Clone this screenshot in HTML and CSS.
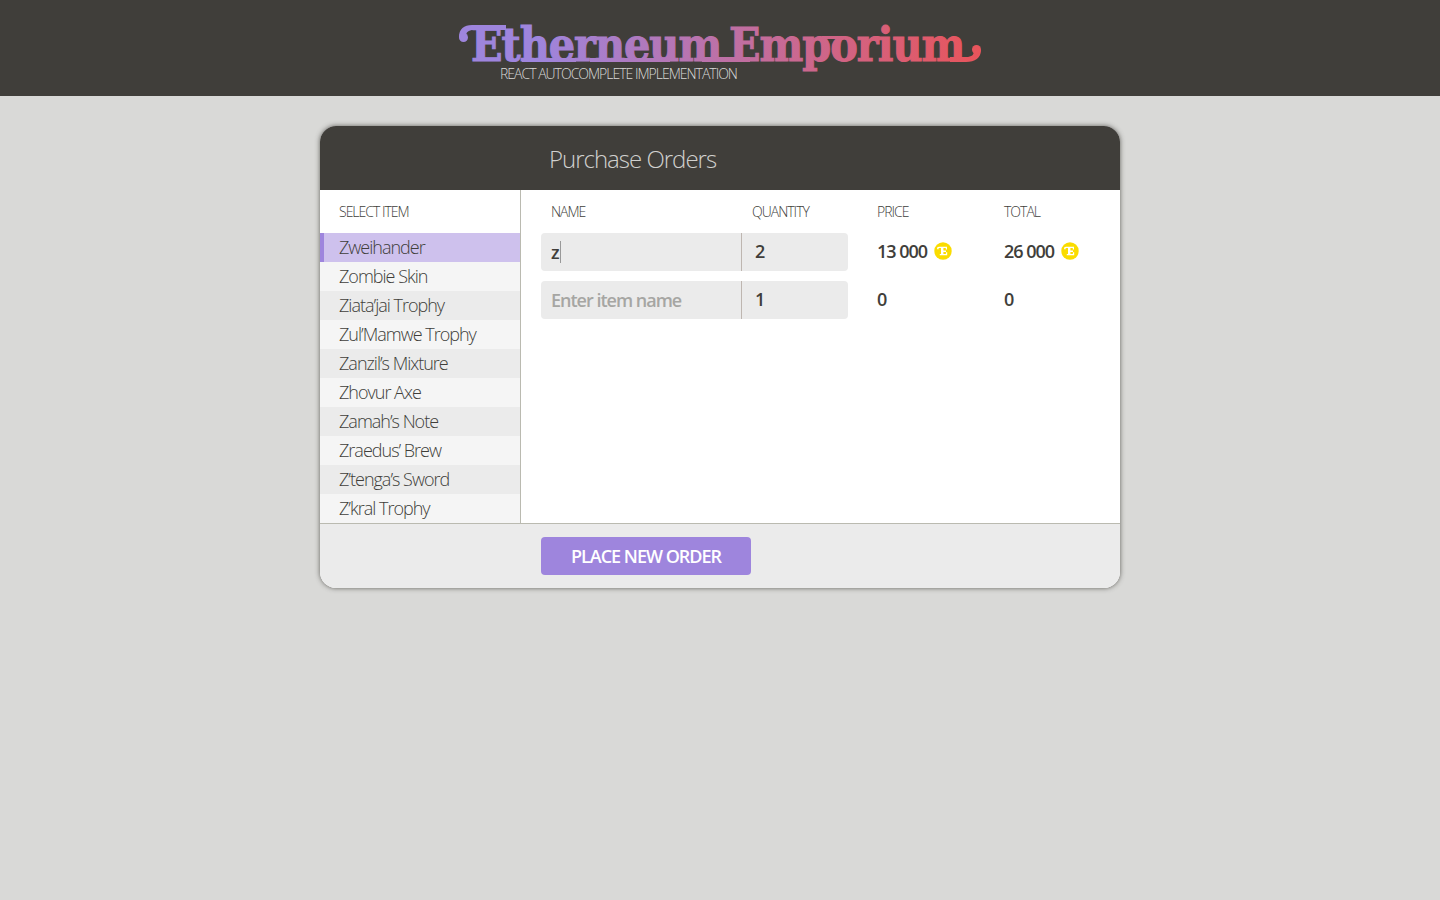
FILE: index.html
```html
<!DOCTYPE html>
<html lang="en">
<head>
<meta charset="utf-8">
<meta name="viewport" content="width=device-width, initial-scale=1">
<title>Etherneum Emporium</title>
<link rel="stylesheet" href="styles.css">
</head>
<body>
<header class="site-header">
  <div class="brand">
    <svg class="brand-logo" viewBox="0 0 524 42" role="img" aria-label="Etherneum Emporium">
      <defs>
        <linearGradient id="brand-fill" gradientUnits="userSpaceOnUse" x1="0" y1="0" x2="524" y2="0">
          <stop offset="0" stop-color="#9e85dd"/>
          <stop offset="0.15" stop-color="#9e85dd"/>
          <stop offset="1" stop-color="#e9545a"/>
        </linearGradient>
      </defs>
      <g fill="url(#brand-fill)">
        <text class="brand-word" x="13" y="37">Etherneum</text>
        <text class="brand-word" x="271" y="37">Emporium</text>
        <circle cx="5.500" cy="13.500" r="4.500"/>
        <path d="M1 13C1 5 6 1 14 1H48V6H16C10 6 8 8 8 13Z"/>
        <path d="M64 34H118V38H64ZM132 34H212V38H132ZM244 33H292V38H244ZM364 12H388V15H364Z"/>
        <circle cx="518.500" cy="25.500" r="4.500"/>
        <path d="M492 33H508C514 33 516 31 516 26H523C523 34 517 38 508 38H492Z"/>
      </g>
    </svg>
    <p class="brand-tagline">REACT AUTOCOMPLETE IMPLEMENTATION</p>
  </div>
</header>

<main class="card">
  <header class="card-header"><h1 class="card-title">Purchase Orders</h1></header>
  <div class="card-body">
    <aside class="picker">
      <h2 class="picker-title" id="picker-title">SELECT ITEM</h2>
      <ul class="picker-list" role="listbox" aria-labelledby="picker-title">
        <li class="picker-item picker-item-active" role="option" aria-selected="true">Zweihander</li>
        <li class="picker-item" role="option">Zombie Skin</li>
        <li class="picker-item" role="option">Ziata’jai Trophy</li>
        <li class="picker-item" role="option">Zul’Mamwe Trophy</li>
        <li class="picker-item" role="option">Zanzil’s Mixture</li>
        <li class="picker-item" role="option">Zhovur Axe</li>
        <li class="picker-item" role="option">Zamah’s Note</li>
        <li class="picker-item" role="option">Zraedus’ Brew</li>
        <li class="picker-item" role="option">Z’tenga’s Sword</li>
        <li class="picker-item" role="option">Z’kral Trophy</li>
      </ul>
    </aside>
    <section class="orders">
      <table class="orders-table">
        <colgroup><col class="col-name"><col class="col-quantity"><col class="col-price"><col></colgroup>
        <thead>
          <tr><th id="h-name">NAME</th><th id="h-quantity">QUANTITY</th><th class="amount">PRICE</th><th class="amount">TOTAL</th></tr>
        </thead>
        <tbody>
          <tr>
            <td class="name-cell"><input class="field field-name" type="text" value="z" aria-labelledby="h-name"><span class="caret"></span></td>
            <td><input class="field field-quantity" type="text" inputmode="numeric" value="2" aria-labelledby="h-quantity"></td>
            <td class="amount"><span class="money">13 000
              <svg class="coin" viewBox="0 0 18 18" aria-hidden="true"><circle cx="9" cy="9" r="8.700" fill="#fadc00"/><path d="M3.200 7.200C2.800 5.400 3.600 4.700 5 4.700H13V7.600H11.800V6H9.400V8.400H12V10H9.400V12H11.900V10.300H13.200V13.300H5.800V12H7V6H5.200C4.600 6 4.500 6.400 4.700 7.200Z" fill="#fff"/></svg></span></td>
            <td class="amount"><span class="money">26 000
              <svg class="coin" viewBox="0 0 18 18" aria-hidden="true"><circle cx="9" cy="9" r="8.700" fill="#fadc00"/><path d="M3.200 7.200C2.800 5.400 3.600 4.700 5 4.700H13V7.600H11.800V6H9.400V8.400H12V10H9.400V12H11.900V10.300H13.200V13.300H5.800V12H7V6H5.200C4.600 6 4.500 6.400 4.700 7.200Z" fill="#fff"/></svg></span></td>
          </tr>
          <tr>
            <td class="name-cell"><input class="field field-name" type="text" placeholder="Enter item name" aria-labelledby="h-name"></td>
            <td><input class="field field-quantity" type="text" inputmode="numeric" value="1" aria-labelledby="h-quantity"></td>
            <td class="amount">0</td>
            <td class="amount">0</td>
          </tr>
        </tbody>
      </table>
    </section>
  </div>
  <footer class="card-footer"><button class="submit" type="button">PLACE NEW ORDER</button></footer>
</main>
</body>
</html>
```

FILE: styles.css
```css
* { box-sizing: border-box; }

body {
  margin: 0;
  background: #d9d9d7;
  color: #403e3a;
  font-family: "Open Sans", sans-serif;
  font-size: 18px;
  letter-spacing: -1px;
}

h1, h2, p, ul { margin: 0; padding: 0; font-weight: 300; }

.site-header {
  display: flex;
  justify-content: center;
  padding: 24px 16px 14px;
  background: #403e3a;
}

.brand { width: 524px; }

.brand-logo { display: block; width: 100%; overflow: visible; }

.brand-word {
  font-family: "DejaVu Serif Condensed", "DejaVu Serif", serif;
  font-size: 46px;
  font-weight: 700;
  stroke: url(#brand-fill);
  stroke-width: 1px;
}

.brand-tagline {
  padding-left: 42px;
  color: #d9d9d7;
  font-size: 14px;
  line-height: 16px;
}

.card {
  max-width: 800px;
  margin: 30px auto;
  overflow: hidden;
  border-radius: 16px;
  background: #fff;
  box-shadow: 0 0 5px rgba(64, 62, 58, 0.8);
}

.card-header { padding: 15px 0 13px 229px; background: #403e3a; }

.card-title { color: #d0d0ce; font-size: 24px; line-height: 36px; }

.card-body { display: grid; grid-template-columns: 201px 1fr; }

.picker { border-right: 1px solid #babab0; }

.picker-title { padding: 10px 19px 9px; font-size: 14px; line-height: 24px; }

.picker-list { list-style: none; }

.picker-item {
  padding-left: 15px;
  border-left: 4px solid #f5f5f5;
  background: #f5f5f5;
  font-weight: 300;
  line-height: 29px;
}

.picker-item:nth-child(odd) { border-color: #ebebeb; background: #ebebeb; }

.picker-item.picker-item-active { border-color: #9e85dd; background: #cec1ed; }

.orders { padding: 0 20px; }

.orders-table {
  width: 100%;
  table-layout: fixed;
  border-collapse: separate;
  border-spacing: 0 10px;
}

.col-name { width: 201px; }
.col-quantity { width: 106px; }
.col-price { width: 127px; }

th, td { padding: 0; text-align: left; }

th {
  height: 23px;
  padding-left: 10px;
  font-size: 14px;
  font-weight: 300;
  line-height: 23px;
}

td { font-weight: 600; }

th.amount { padding-left: 29px; }

td.amount { padding: 0 0 2px 29px; }

.name-cell { position: relative; }

.field {
  display: block;
  width: 100%;
  height: 38px;
  margin: 0;
  border: 0;
  background: #ebebeb;
  color: inherit;
  font: inherit;
  letter-spacing: inherit;
}

.field::placeholder { color: #a6a6a3; opacity: 1; }

.field-name {
  padding: 0 10px;
  border-right: 1px solid #beb6b0;
  border-radius: 4px 0 0 4px;
}

.field-quantity { padding: 0 13px 2px; border-radius: 0 4px 4px 0; }

.caret {
  position: absolute;
  top: 8px;
  left: 19px;
  width: 1px;
  height: 22px;
  background: #999;
}

.money { display: flex; align-items: center; gap: 7px; }

.coin { width: 18px; height: 18px; }

.card-footer {
  padding: 13px 0 13px 221px;
  border-top: 1px solid #babab0;
  background: #ebebeb;
}

.submit {
  display: block;
  width: 210px;
  height: 38px;
  padding: 0;
  border: 0;
  border-radius: 4px;
  background: #9e85dd;
  color: #fff;
  font: inherit;
  font-weight: 600;
  letter-spacing: inherit;
}
```
